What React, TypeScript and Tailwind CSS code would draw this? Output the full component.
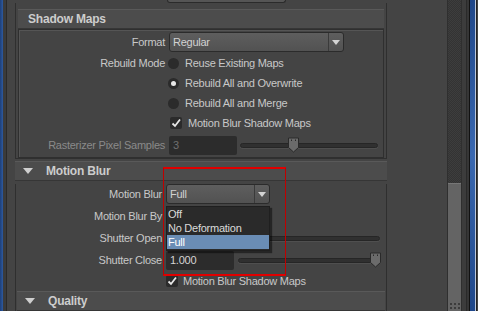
const font = { fontFamily: '"Liberation Sans", Arial, sans-serif' };

const Arrow = () => (
  <svg width="8" height="5" viewBox="0 0 8 5">
    <path d="M0 0 H8 L4 5 Z" fill="#d4d4d4" />
  </svg>
);

const HeaderArrow = () => (
  <svg width="10" height="6" viewBox="0 0 10 6">
    <path d="M0 0 H10 L5 6 Z" fill="#cfcfcf" />
  </svg>
);

const Check = () => (
  <svg width="12" height="12" viewBox="0 0 12 12">
    <path d="M2.5 6.5 L5 9 L10 2.5" stroke="#e6e6e6" strokeWidth="1.8" fill="none" />
  </svg>
);

const Handle = () => (
  <svg width="13" height="17" viewBox="0 0 13 17">
    <path d="M1.5 1.5 H11.5 V11 L6.5 15.5 L1.5 11 Z" fill="#6b6b6b" stroke="#2a2a2a" strokeWidth="1" />
    <rect x="4" y="3" width="1" height="1.5" fill="#2a2a2a" />
    <rect x="8" y="3" width="1" height="1.5" fill="#2a2a2a" />
  </svg>
);

const Slider = ({ pos }: { pos: number }) => (
  <div className="relative flex-1 h-full flex items-center">
    <div className="w-full h-[5px] rounded-full bg-[#303030] border border-[#262626] shadow-[0_1px_0_#4f4f4f]" />
    <div className="absolute top-1/2 -translate-y-1/2" style={{ left: pos }}>
      <Handle />
    </div>
  </div>
);

const Radio = ({ on }: { on?: boolean }) => (
  <div className="w-[11px] h-[11px] rounded-full bg-[#2b2b2b] flex items-center justify-center">
    {on && <div className="w-[5px] h-[5px] rounded-full bg-[#e8e8e8]" />}
  </div>
);

const Dropdown = ({ value, w, split }: { value: string; w: string; split: string }) => (
  <div className={`${w} h-[20px] flex rounded-[3px] border border-[#2b2b2b] bg-gradient-to-b from-[#5e5e5e] to-[#525252] text-[#d2d2d2]`}>
    <div className={`${split} pl-[3px] flex items-center border-r border-[#3a3a3a]`}>{value}</div>
    <div className="flex-1 flex items-center justify-center">
      <Arrow />
    </div>
  </div>
);

const Header = ({ title, arrow, cls }: { title: string; arrow?: boolean; cls: string }) => (
  <div className={`${cls} h-[20px] flex items-center bg-[#4c4c4c] border-t border-[#595959] border-b border-b-[#363636] text-[#cdcdcd] font-bold text-[12px] tracking-[-0.2px]`}>
    {arrow ? (
      <>
        <div className="w-[31px] pl-[8px] flex items-center">
          <HeaderArrow />
        </div>
        {title}
      </>
    ) : (
      <span className="pl-[10px]">{title}</span>
    )}
  </div>
);

export default function App() {
  return (
    <div
      className="w-[478px] h-[311px] overflow-hidden flex bg-[#444444] text-[11px] tracking-[-0.25px] text-[#c8c8c8]"
      style={font}
    >
      {/* left edge */}
      <div className="w-[3px] bg-gradient-to-r from-[#1e3f78] to-[#2d5aa0]" />
      <div className="w-[3px] bg-[#3b3b3b]" />
      <div className="w-[1px] bg-[#2a2a2a]" />

      {/* main panel */}
      <div className="w-[440px] flex flex-col">
        <div className="h-[3px] flex">
          <div className="ml-[160px] w-[119px] h-[3px] bg-[#555] border-b border-x border-[#2b2b2b] rounded-b-[3px]" />
        </div>

        {/* Shadows frame */}
        <div className="ml-[8px] w-[372px] h-[156px] border-x border-b border-[#2f2f2f] pt-[6px] px-[2px]">
          <Header title="Shadow Maps" cls="w-[366px]" />
          <div className="w-[366px] h-[129px] border border-[#2f2f2f] shadow-[inset_1px_1px_0_#555]">
            <div className="flex items-center h-[20px] mt-[2px]">
              <div className="w-[146px] text-right">Format</div>
              <div className="ml-[4px]">
                <Dropdown value="Regular" w="w-[175px]" split="w-[159px]" />
              </div>
            </div>
            <div className="flex items-center h-[20px] mt-[1px]">
              <div className="w-[146px] text-right">Rebuild Mode</div>
              <div className="ml-[3px] flex items-center gap-[6px]">
                <Radio />
                <span>Reuse Existing Maps</span>
              </div>
            </div>
            <div className="flex items-center h-[20px]">
              <div className="w-[146px]" />
              <div className="ml-[3px] flex items-center gap-[6px]">
                <Radio on />
                <span>Rebuild All and Overwrite</span>
              </div>
            </div>
            <div className="flex items-center h-[20px]">
              <div className="w-[146px]" />
              <div className="ml-[3px] flex items-center gap-[6px]">
                <Radio />
                <span>Rebuild All and Merge</span>
              </div>
            </div>
            <div className="flex items-center h-[20px]">
              <div className="w-[146px]" />
              <div className="ml-[5px] flex items-center gap-[6px]">
                <div className="w-[12px] h-[12px] bg-[#2b2b2b] rounded-[2px]">
                  <Check />
                </div>
                <span>Motion Blur Shadow Maps</span>
              </div>
            </div>
            <div className="flex items-center h-[20px] mt-[2px]">
              <div className="w-[146px] text-right text-[#8a8a8a]">Rasterizer Pixel Samples</div>
              <div className="ml-[4px] w-[68px] h-[19px] bg-[#2c2c2c] rounded-[2px] pl-[4px] flex items-center text-[#707070]">3</div>
              <div className="ml-[3px] w-[138px] h-[20px] flex">
                <Slider pos={47} />
              </div>
            </div>
          </div>
        </div>

        {/* Motion Blur */}
        <div className="mt-[2px] ml-[8px] w-[372px]">
          <Header title="Motion Blur" arrow cls="w-[372px]" />
          <div className="relative w-[372px] h-[130px] border-x border-[#2f2f2f] px-0">
            <div className="flex items-center h-[20px] mt-[3px]">
              <div className="w-[146px] text-right">Motion Blur</div>
              <div className="ml-[4px]">
                <Dropdown value="Full" w="w-[104px]" split="w-[88px]" />
              </div>
            </div>
            <div className="flex items-center h-[22px] mt-[1px]">
              <div className="w-[146px] text-right">Motion Blur By</div>
            </div>
            <div className="flex items-center h-[22px]">
              <div className="w-[146px] text-right">Shutter Open</div>
              <div className="ml-[4px] w-[68px] h-[19px] bg-[#2c2c2c] rounded-[2px]" />
              <div className="ml-[4px] w-[142px] h-[20px] flex">
                <Slider pos={-2} />
              </div>
            </div>
            <div className="flex items-center h-[22px]">
              <div className="w-[146px] text-right">Shutter Close</div>
              <div className="ml-[4px] w-[68px] h-[19px] bg-[#2c2c2c] rounded-[2px] pl-[4px] flex items-center text-[#d4d4d4]">1.000</div>
              <div className="ml-[4px] w-[142px] h-[20px] flex">
                <Slider pos={131} />
              </div>
            </div>
            <div className="flex items-center h-[20px]">
              <div className="w-[146px]" />
              <div className="ml-[4px] flex items-center gap-[5px]">
                <div className="w-[12px] h-[12px] bg-[#2b2b2b] rounded-[2px]">
                  <Check />
                </div>
                <span>Motion Blur Shadow Maps</span>
              </div>
            </div>
            <div className="px-[1px]">
              <Header title="Quality" arrow cls="w-[368px]" />
            </div>

            {/* open dropdown list */}
            <div className="absolute left-[150px] top-[22px] w-[104px] bg-[#2a2a2a] border border-[#1f1f1f] shadow-[2px_2px_1px_rgba(0,0,0,0.45)] text-[#dadada] pb-[1px]">
              <div className="h-[14px] leading-[14px] pl-[1px]">Off</div>
              <div className="h-[14px] leading-[14px] pl-[1px]">No Deformation</div>
              <div className="h-[14px] leading-[14px] pl-[1px] bg-[#6a8db5] text-white">Full</div>
            </div>

            {/* red markup */}
            <div className="absolute left-[147px] top-[-17px] w-[123px] h-[109px] border-y-2 border-y-[#e10000] border-x border-x-[#c00000]" />
          </div>
        </div>
      </div>

      {/* scrollbar */}
      <div className="w-[15px] flex flex-col border-x border-[#2f2f2f]">
        <div className="h-[183px] bg-[#393939] bg-[repeating-conic-gradient(#333_0_25%,#3d3d3d_0_50%)] bg-[length:2px_2px]" />
        <div className="flex-1 bg-[#646464] border-t border-[#777] flex items-end justify-center pb-[2px]">
          <div className="grid grid-cols-3 gap-[2px]">
            <div className="w-[2px] h-[2px] bg-[#3c3c3c]" />
            <div className="w-[2px] h-[2px] bg-[#3c3c3c]" />
            <div className="w-[2px] h-[2px] bg-[#3c3c3c]" />
            <div className="w-[2px] h-[2px] bg-[#3c3c3c]" />
            <div className="w-[2px] h-[2px] bg-[#3c3c3c]" />
            <div className="w-[2px] h-[2px] bg-[#3c3c3c]" />
          </div>
        </div>
      </div>

      {/* right edge */}
      <div className="w-[4px] bg-[#3c3c3c]" />
      <div className="w-[1px] bg-[#2a2a2a]" />
      <div className="w-[2px] bg-[#363636]" />
      <div className="w-[1px] bg-[#111]" />
      <div className="w-[5px] bg-gradient-to-b from-[#1f4789] via-[#3a68b0] to-[#1f4789]" />
      <div className="w-[1px] bg-[#bcc8dc]" />
      <div className="w-[1px] bg-[#222]" />
    </div>
  );
}
